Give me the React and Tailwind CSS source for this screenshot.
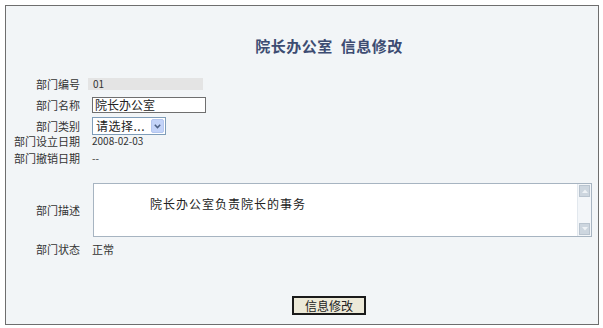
import React from "react";

const font = { fontFamily: '"Noto Sans CJK SC", "Noto Sans", sans-serif' };

function Label({ children }) {
  return (
    <div className="w-[74px] shrink-0 text-right text-[11px] leading-none text-[#333]">
      {children}
    </div>
  );
}

export default function App() {
  return (
    <div className="w-[603px] h-[328px] bg-white pt-[5px] pl-[5px]" style={font}>
      <div className="w-[594px] h-[320px] border border-[#6e6e6e] bg-[#f2f5f7] flex flex-col">
        <div className="mt-[29px] h-[20px] pl-[54px] flex items-center justify-center text-[15px] font-bold leading-none tracking-[0.5px] text-[#3d4c72]">
          院长办公室&nbsp;&nbsp;信息修改
        </div>

        <div className="mt-[21px] h-[16px] flex items-center">
          <Label>部门编号</Label>
          <div className="ml-[8px] w-[115px] h-[12px] bg-[#e4e4e4] pl-[5px] flex items-center text-[10px] text-[#333] leading-none">
            01
          </div>
        </div>

        <div className="mt-[5px] h-[16px] flex items-center">
          <Label>部门名称</Label>
          <div className="ml-[12px] w-[114px] h-[16px] bg-white border border-[#6f6f6f] pl-[2px] flex items-center text-[12px] leading-none text-[#222]">
            院长办公室
          </div>
        </div>

        <div className="mt-[4px] h-[18px] flex items-center">
          <Label>部门类别</Label>
          <div className="ml-[12px] w-[74px] h-[18px] bg-white border border-[#7f9db9] flex items-center">
            <div className="flex-1 pl-[3px] text-[12px] leading-none text-[#222] tracking-[0.5px]">请选择...</div>
            <div className="w-[13px] h-[14px] mr-[1px] rounded-[2px] bg-[#c3d3f8] border border-[#b4c6ef] flex items-center justify-center">
              <svg width="7" height="5" viewBox="0 0 7 5">
                <path d="M0.8 0.8 L3.5 3.6 L6.2 0.8" fill="none" stroke="#4d6185" strokeWidth="1.5" />
              </svg>
            </div>
          </div>
        </div>

        <div className="mt-[1px] h-[10px] flex items-center">
          <Label>部门设立日期</Label>
          <div className="ml-[12px] text-[10px] leading-none text-[#333]">2008-02-03</div>
        </div>

        <div className="mt-[7px] h-[10px] flex items-center">
          <Label>部门撤销日期</Label>
          <div className="ml-[12px] text-[10px] leading-none text-[#333]">--</div>
        </div>

        <div className="mt-[20px] h-[54px] flex items-center">
          <Label>部门描述</Label>
          <div className="ml-[13px] w-[499px] h-[54px] bg-white border border-[#a7b4c1] flex">
            <div className="flex-1 pl-[56px] pt-[14px] text-[12px] leading-none tracking-[1px] text-[#222]">
              院长办公室负责院长的事务
            </div>
            <div className="w-[14px] h-full bg-[#f3f6f9] border-l border-[#e2e8ee] flex flex-col justify-between py-[1px]">
              <div className="h-[12px] mx-[1px] bg-[#cdd6df] border border-[#b9c4cf] flex items-center justify-center">
                <svg width="6" height="4" viewBox="0 0 6 4"><path d="M0 4 L3 0.5 L6 4 Z" fill="#eef2f6" /></svg>
              </div>
              <div className="h-[12px] mx-[1px] bg-[#cdd6df] border border-[#b9c4cf] flex items-center justify-center">
                <svg width="6" height="4" viewBox="0 0 6 4"><path d="M0 0 L3 3.5 L6 0 Z" fill="#eef2f6" /></svg>
              </div>
            </div>
          </div>
        </div>

        <div className="mt-[7px] h-[10px] flex items-center">
          <Label>部门状态</Label>
          <div className="ml-[12px] text-[11px] leading-none text-[#333]">正常</div>
        </div>

        <div className="mt-[42px] h-[19px] pl-[54px] flex justify-center">
          <div className="w-[74px] h-[19px] bg-[#ece9d8] border-2 border-[#1a1a1a] flex items-center justify-center text-[12px] leading-none text-[#222]">
            信息修改
          </div>
        </div>
      </div>
    </div>
  );
}
